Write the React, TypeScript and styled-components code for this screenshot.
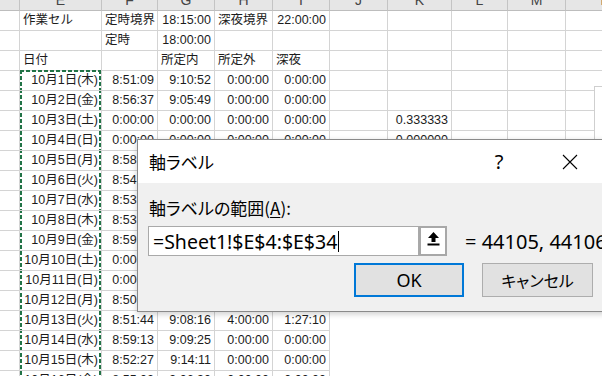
import styled, { createGlobalStyle, css } from 'styled-components';

const GlobalStyle = createGlobalStyle`
  html, body {
    margin: 0;
    padding: 0;
    background: #fff;
    overflow: hidden;
  }
`;

const COLUMN_WIDTHS = [20, 82, 56, 57, 58, 57, 58, 64, 56, 58, 80];
const COLUMN_LETTERS = ['', 'E', 'F', 'G', 'H', 'I', 'J', 'K', 'L', 'M', 'N'];
const SELECTION_GREEN = '#217346';

const Screen = styled.div`
  position: relative;
  width: 602px;
  height: 376px;
  overflow: hidden;
  background: #fff;
  font-family: 'Liberation Sans', 'Noto Sans CJK JP', sans-serif;
`;

const Sheet = styled.div`
  display: grid;
  grid-template-columns: ${COLUMN_WIDTHS.map((w) => `${w}px`).join(' ')};
  grid-template-rows: 21px;
  grid-auto-rows: 20px;
  margin-top: -10px;
`;

const ColumnHeader = styled.div`
  box-sizing: border-box;
  background: #e6e6e6;
  border-right: 1px solid #c4c4c4;
  border-bottom: 1px solid #bdbdbd;
  text-align: center;
  font-size: 14px;
  line-height: 20px;
  color: #444;
`;

const vDash = `linear-gradient(180deg, ${SELECTION_GREEN} 0 4px, transparent 4px 6px)`;
const hDash = `linear-gradient(90deg, ${SELECTION_GREEN} 0 4px, transparent 4px 6px)`;

// marching-ants border of the copied range, drawn per cell so it follows the grid
const copyMark = (first: boolean, phase: number) => css`
  &::after {
    content: '';
    position: absolute;
    top: ${first ? -1 : 0}px;
    bottom: 0;
    left: 0;
    right: 0;
    pointer-events: none;
    background:
      ${first ? `${hDash} 0 0 / 6px 2px repeat-x,` : ''}
      ${vDash} 0 ${-phase}px / 2px 6px repeat-y,
      ${vDash} 100% ${-phase}px / 2px 6px repeat-y;
  }
`;

const Cell = styled.div<{ $align: 'left' | 'right'; $mark?: boolean; $first?: boolean; $phase?: number }>`
  position: relative;
  box-sizing: border-box;
  border-right: 1px solid #d4d4d4;
  border-bottom: 1px solid #d4d4d4;
  padding: 0 3px;
  font-size: 12.5px;
  line-height: 19px;
  color: #1c1c1c;
  white-space: nowrap;
  text-align: ${({ $align }) => $align};
  ${({ $mark, $first, $phase }) => $mark && copyMark(!!$first, $phase ?? 0)}
`;

const ChartFrame = styled.div`
  position: absolute;
  left: 594px;
  top: 86px;
  width: 60px;
  height: 320px;
  background: #fff;
  border: 1px solid #cfcfcf;
  z-index: 2;
`;

const HiddenObject = styled.div`
  position: absolute;
  left: 330px;
  top: 290px;
  width: 300px;
  height: 100px;
  background: #fff;
  z-index: 2;
`;

const Dialog = styled.div`
  position: absolute;
  left: 137px;
  top: 139px;
  width: 470px;
  height: 173px;
  box-sizing: border-box;
  border: 1px solid #8a8a8a;
  background: #f0f0f0;
  box-shadow: 0 2px 6px rgba(0, 0, 0, 0.2);
  display: flex;
  flex-direction: column;
  z-index: 5;
  font-family: 'Noto Sans CJK JP', sans-serif;
  font-feature-settings: 'palt';
  color: #000;
`;

const TitleBar = styled.div`
  height: 43px;
  background: #fff;
  display: flex;
  align-items: center;
  padding: 0 13px 0 11px;
`;

const Title = styled.div`
  flex: 1;
  font-size: 17px;
`;

const HelpMark = styled.div`
  width: 30px;
  margin-right: 33px;
  text-align: center;
  font-family: 'Noto Sans', sans-serif;
  font-size: 20px;
`;

const CloseButton = styled.div`
  width: 46px;
  display: flex;
  justify-content: center;
`;

const Body = styled.div`
  flex: 1;
  display: flex;
  flex-direction: column;
  padding: 15px 13px 0 10px;
`;

const FieldLabel = styled.div`
  font-size: 17px;
  line-height: 20px;
  padding-left: 1px;
  u {
    text-decoration-thickness: 1px;
    text-underline-offset: 2px;
  }
`;

const InputRow = styled.div`
  display: flex;
  align-items: center;
  height: 30px;
  margin-top: 8px;
`;

const RefInput = styled.div`
  box-sizing: border-box;
  flex: 0 0 271px;
  height: 30px;
  border: 1px solid #a9a9a9;
  background: #fff;
  padding-left: 4px;
  display: flex;
  align-items: center;
  font-family: 'Noto Sans', sans-serif;
  font-size: 19.5px;
  white-space: nowrap;
`;

const Caret = styled.span`
  display: inline-block;
  width: 1px;
  height: 21px;
  background: #000;
  margin-left: 1px;
`;

const CollapseButton = styled.div`
  box-sizing: border-box;
  flex: 0 0 28px;
  height: 30px;
  border: 2px solid #a8a8a8;
  background: #fff;
  display: flex;
  justify-content: center;
  padding-top: 4px;
`;

const Preview = styled.div`
  flex: none;
  margin-left: 18px;
  font-family: 'Noto Sans', sans-serif;
  font-size: 20px;
  white-space: nowrap;
`;

const ButtonRow = styled.div`
  display: flex;
  justify-content: flex-end;
  gap: 18px;
  margin-top: 7px;
`;

const DialogButton = styled.div<{ $primary?: boolean; $width: number }>`
  box-sizing: border-box;
  flex: 0 0 ${({ $width }) => $width}px;
  height: 34px;
  background: #e1e1e1;
  border: ${({ $primary }) => ($primary ? '2px solid #0078d7' : '1px solid #adadad')};
  display: flex;
  align-items: center;
  justify-content: center;
  font-size: 16px;
`;

const OkLabel = styled.span`
  font-family: 'Noto Sans', sans-serif;
  font-size: 18px;
`;

const WEEKDAYS = ['木', '金', '土', '日', '月', '火', '水'];

// F, G, H, I (and K where the sheet shows it) per day of October
const DAYS: string[][] = [
  ['8:51:09', '9:10:52', '0:00:00', '0:00:00'],
  ['8:56:37', '9:05:49', '0:00:00', '0:00:00'],
  ['0:00:00', '0:00:00', '0:00:00', '0:00:00', '0.333333'],
  ['0:00:00', '0:00:00', '0:00:00', '0:00:00', '0.000000'],
  ['8:58:14', '9:03:26', '0:00:00', '0:00:00'],
  ['8:54:50', '9:07:12', '0:00:00', '0:00:00'],
  ['8:53:31', '9:06:48', '0:00:00', '0:00:00'],
  ['8:53:05', '9:11:39', '0:00:00', '0:00:00'],
  ['8:59:22', '9:04:17', '0:00:00', '0:00:00'],
  ['0:00:00', '0:00:00', '0:00:00', '0:00:00'],
  ['0:00:00', '0:00:00', '0:00:00', '0:00:00'],
  ['8:50:46', '9:12:03', '0:00:00', '0:00:00'],
  ['8:51:44', '9:08:16', '4:00:00', '1:27:10'],
  ['8:59:13', '9:09:25', '0:00:00', '0:00:00'],
  ['8:52:27', '9:14:11', '0:00:00', '0:00:00'],
  ['8:55:02', '9:06:30', '0:00:00', '0:00:00'],
];

const headRows: string[][] = [
  ['', '作業セル', '定時境界', '18:15:00', '深夜境界', '22:00:00'],
  ['', '', '定時', '18:00:00'],
  ['', '日付', '', '所定内', '所定外', '深夜'],
];

const dayRows: string[][] = DAYS.map(([f, g, h, i, k], idx) => {
  const day = idx + 1;
  return ['', `10月${day}日(${WEEKDAYS[idx % 7]})`, f, g, h, i, '', k ?? ''];
});

const rows = [...headRows, ...dayRows];

const CloseIcon = () => (
  <svg width="16" height="16" viewBox="0 0 16 16">
    <path d="M1 1 L15 15 M15 1 L1 15" stroke="#000" strokeWidth="1.1" fill="none" />
  </svg>
);

const UploadIcon = () => (
  <svg width="13" height="14" viewBox="0 0 13 14">
    <path d="M6.5 0 L12 6 L8.5 6 L8.5 10 L4.5 10 L4.5 6 L1 6 Z" fill="#000" />
    <rect x="0.5" y="11.5" width="12" height="2" fill="#000" />
  </svg>
);

export default function App() {
  return (
    <Screen>
      <GlobalStyle />
      <Sheet>
        {COLUMN_LETTERS.map((letter, idx) => (
          <ColumnHeader key={`head_${idx}`}>{letter}</ColumnHeader>
        ))}
        {rows.map((row, r) =>
          COLUMN_WIDTHS.map((_, c) => {
            const value = row[c] ?? '';
            const dayIndex = r - headRows.length;
            const marked = c === 1 && dayIndex >= 0;
            return (
              <Cell
                key={`cell_${r}_${c}`}
                $align={/^\d/.test(value) ? 'right' : 'left'}
                $mark={marked}
                $first={marked && dayIndex === 0}
                $phase={marked ? (dayIndex * 20) % 6 : 0}
              >
                {value}
              </Cell>
            );
          }),
        )}
      </Sheet>
      <ChartFrame />
      <HiddenObject />
      <Dialog>
        <TitleBar>
          <Title>軸ラベル</Title>
          <HelpMark>?</HelpMark>
          <CloseButton>
            <CloseIcon />
          </CloseButton>
        </TitleBar>
        <Body>
          <FieldLabel>
            軸ラベルの範囲(<u>A</u>):
          </FieldLabel>
          <InputRow>
            <RefInput>
              =Sheet1!$E$4:$E$34
              <Caret />
            </RefInput>
            <CollapseButton>
              <UploadIcon />
            </CollapseButton>
            <Preview>= 44105, 44106</Preview>
          </InputRow>
          <ButtonRow>
            <DialogButton $primary $width={110}>
              <OkLabel>OK</OkLabel>
            </DialogButton>
            <DialogButton $width={111}>キャンセル</DialogButton>
          </ButtonRow>
        </Body>
      </Dialog>
    </Screen>
  );
}
